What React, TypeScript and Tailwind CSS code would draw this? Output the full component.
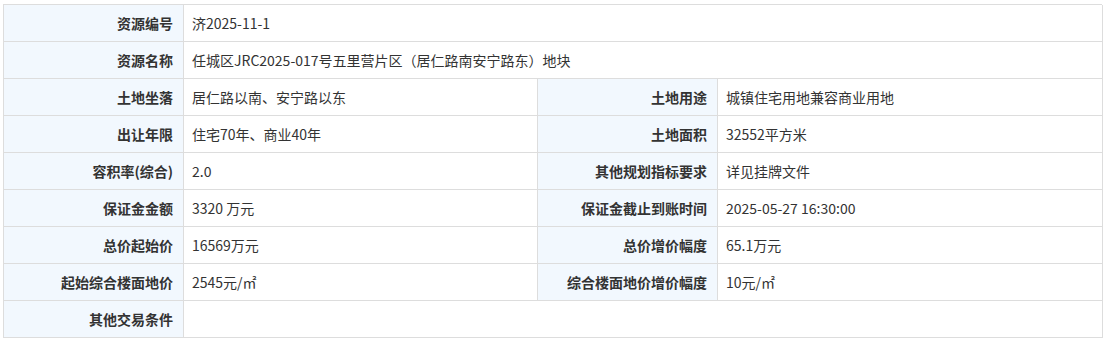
const rows: [string, string, string?, string?][] = [
  ["资源编号", "济2025-11-1"],
  ["资源名称", "任城区JRC2025-017号五里营片区（居仁路南安宁路东）地块"],
  ["土地坐落", "居仁路以南、安宁路以东", "土地用途", "城镇住宅用地兼容商业用地"],
  ["出让年限", "住宅70年、商业40年", "土地面积", "32552平方米"],
  ["容积率(综合)", "2.0", "其他规划指标要求", "详见挂牌文件"],
  ["保证金金额", "3320 万元", "保证金截止到账时间", "2025-05-27 16:30:00"],
  ["总价起始价", "16569万元", "总价增价幅度", "65.1万元"],
  ["起始综合楼面地价", "2545元/㎡", "综合楼面地价增价幅度", "10元/㎡"],
  ["其他交易条件", ""],
];

const label =
  "flex items-center justify-end pr-[10px] bg-[#f2f8fe] border-r border-b border-[#dddddd] font-bold text-[#333333]";
const value = "flex items-center pl-[8px] border-r border-b border-[#dddddd] text-[#333333]";

export default function App() {
  return (
    <div className="w-[1108px] h-[342px] bg-white pt-[4px] pl-[3px] text-[14px] font-['Noto_Sans_CJK_SC','Noto_Sans',sans-serif]">
      <div className="grid w-[1099px] grid-cols-[180px_354px_180px_385px] auto-rows-[37px] border-l border-t border-[#dddddd]">
        {rows.map(([l1, v1, l2, v2]) =>
          l2 ? (
            <div key={l1} className="contents">
              <div className={label}>{l1}</div>
              <div className={value}>{v1}</div>
              <div className={label}>{l2}</div>
              <div className={value}>{v2}</div>
            </div>
          ) : (
            <div key={l1} className="contents">
              <div className={label}>{l1}</div>
              <div className={`${value} col-span-3`}>{v1}</div>
            </div>
          )
        )}
      </div>
    </div>
  );
}
